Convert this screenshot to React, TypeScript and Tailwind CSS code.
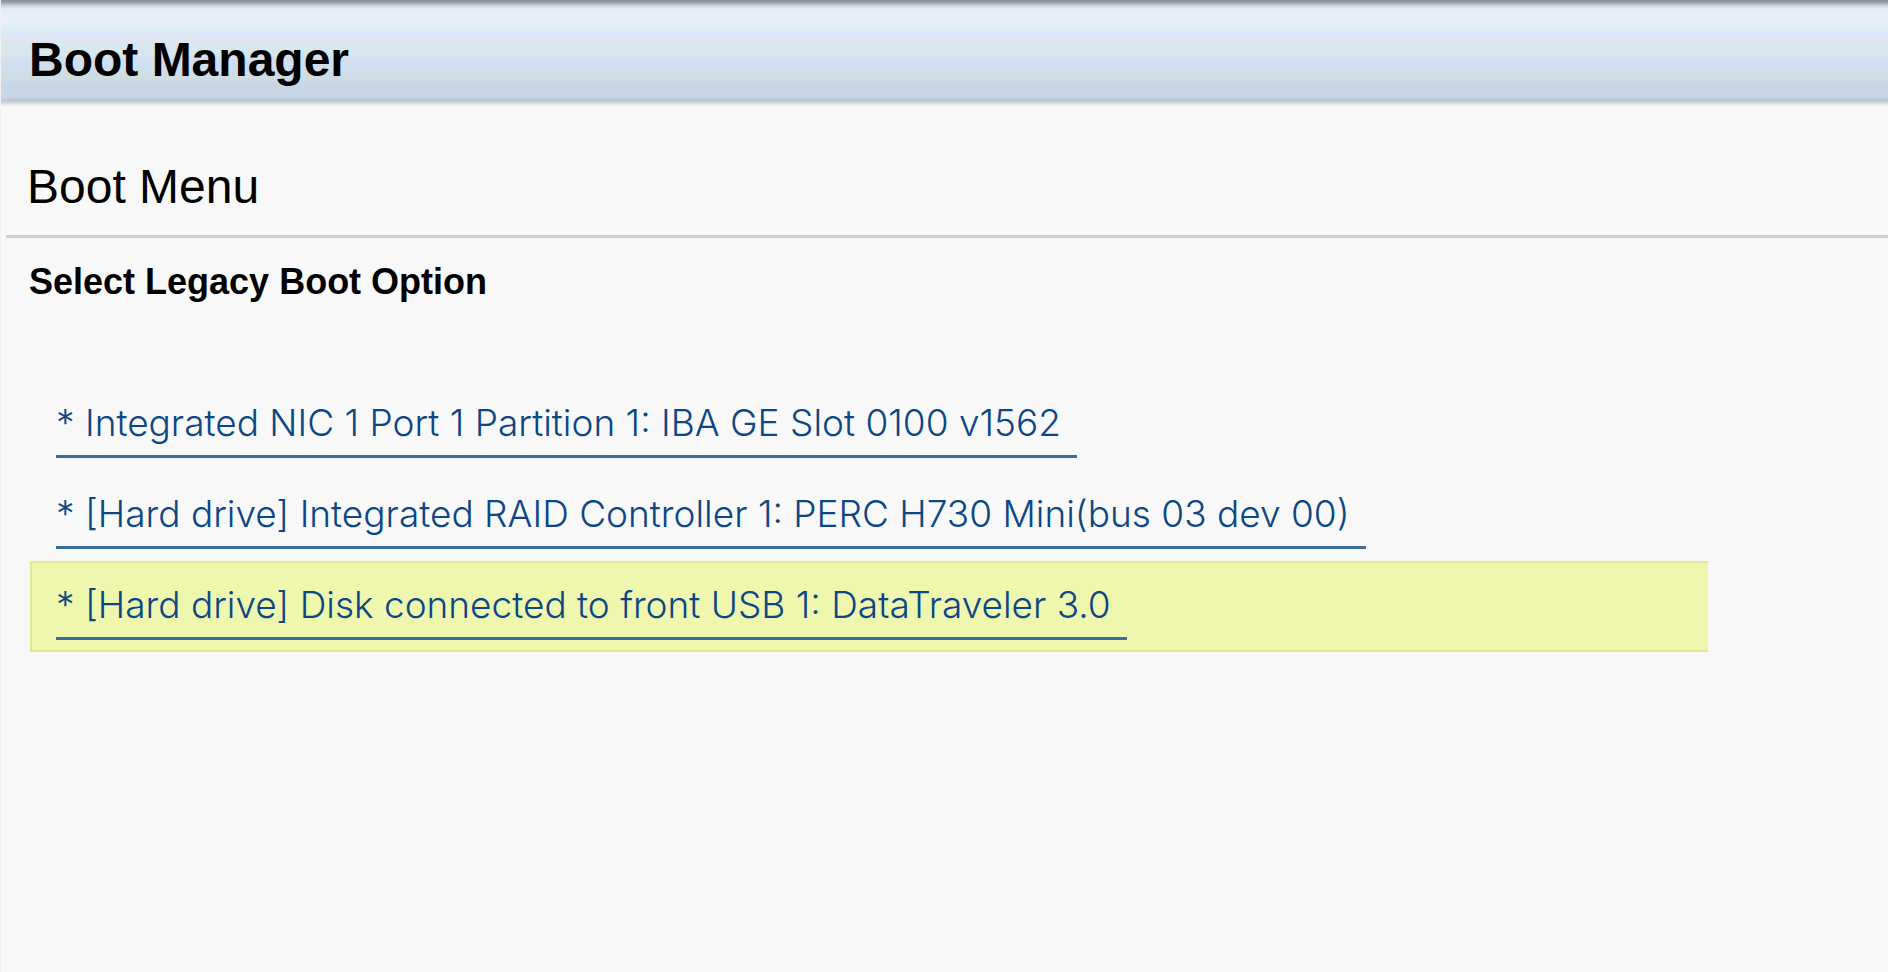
const bootOptions = [
  { label: '* Integrated NIC 1 Port 1 Partition 1: IBA GE Slot 0100 v1562', selected: false },
  { label: '* [Hard drive] Integrated RAID Controller 1: PERC H730 Mini(bus 03 dev 00)', selected: false },
  { label: '* [Hard drive] Disk connected to front USB 1: DataTraveler 3.0', selected: true },
];

function BootOption({ label, selected }: { label: string; selected: boolean }) {
  return (
    <li
      className={
        selected
          ? 'flex h-[91px] border-y-2 border-l-2 border-[#e0e994] bg-[#eff6ae] pl-6 pt-[22px]'
          : 'flex h-[91px] border-y-2 border-l-2 border-transparent pl-6 pt-[22px]'
      }
    >
      <a
        href="#"
        aria-current={selected ? 'true' : undefined}
        className="h-[55px] whitespace-nowrap border-b-[3px] border-[#3a6da0] pr-4 font-['Inter',sans-serif] text-[37px] leading-10 font-light text-[#0b4785]"
      >
        {label}
      </a>
    </li>
  );
}

export default function App() {
  return (
    <div className="flex min-h-screen flex-col overflow-x-hidden border-l border-[#f0f0f3] bg-[#f8f8f8] font-['Liberation_Sans',Arial,sans-serif] text-black">
      <header className="h-[107px] bg-[linear-gradient(to_bottom,#84919c_0px,#8f9aa5_2px,#c3cbd3_5px,#e6edf6_9px,#e7eff7_22px,#dcf0f7_28px,#dde7f7_34px,#e0e5f0_41px,#d6e8ee_46px,#d7e8ec_54px,#d6deee_59px,#cfdff0_64px,#cfdff0_69px,#cfdde3_74px,#cedde3_79px,#c7d7e6_83px,#c8d6e8_97px,#b9c9e0_100px,#c9ccd1_102px,#e2e2e3_104px,#f8f8f8_107px)] pt-9 pl-7">
        <h1 className="text-5xl leading-12 font-bold">Boot Manager</h1>
      </header>
      <main>
        <h2 className="pt-14 pl-[26px] text-5xl leading-12">Boot Menu</h2>
        <hr className="mt-6 ml-[5px] border-t-[3px] border-[#cfcfcf]" />
        <h3 className="mt-[26px] pl-7 text-4xl leading-9 font-bold">Select Legacy Boot Option</h3>
        <ul className="mt-[79px] mr-[180px] ml-[29px]">
          {bootOptions.map((option) => (
            <BootOption key={option.label} {...option} />
          ))}
        </ul>
      </main>
    </div>
  );
}
